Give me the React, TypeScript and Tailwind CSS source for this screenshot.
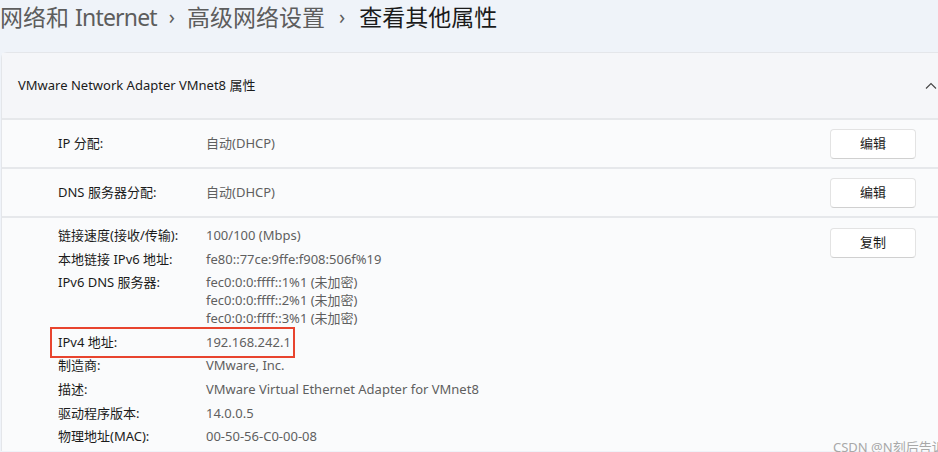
import React from "react";

const font = { fontFamily: '"Noto Sans", "Noto Sans CJK SC", sans-serif' };

function Btn({ children }: { children: React.ReactNode }) {
  return (
    <button className="w-[86px] h-[30px] rounded-[4px] bg-white border border-[#e3e3e3] border-b-[#d0d0d0] text-[13px] text-[#1b1b1b] flex items-center justify-center">
      {children}
    </button>
  );
}

const details: [string, string[]][] = [
  ["链接速度(接收/传输):", ["100/100 (Mbps)"]],
  ["本地链接 IPv6 地址:", ["fe80::77ce:9ffe:f908:506f%19"]],
  ["IPv6 DNS 服务器:", ["fec0:0:0:ffff::1%1 (未加密)", "fec0:0:0:ffff::2%1 (未加密)", "fec0:0:0:ffff::3%1 (未加密)"]],
  ["IPv4 地址:", ["192.168.242.1"]],
  ["制造商:", ["VMware, Inc."]],
  ["描述:", ["VMware Virtual Ethernet Adapter for VMnet8"]],
  ["驱动程序版本:", ["14.0.0.5"]],
  ["物理地址(MAC):", ["00-50-56-C0-00-08"]],
];

export default function App() {
  return (
    <div className="w-[938px] h-[452px] overflow-hidden bg-[#eff3f9] relative" style={font}>
      <div className="h-[52px] flex items-start pt-[1px] text-[23px] leading-[32px] whitespace-nowrap">
        <span className="text-[#5d5d5d]">网络和 <span className="tracking-[-0.8px]">Internet</span></span>
        <span className="text-[#5d5d5d] mx-[12px] text-[20px]">›</span>
        <span className="text-[#5d5d5d]">高级网络设置</span>
        <span className="text-[#5d5d5d] mx-[14px] text-[20px]">›</span>
        <span className="text-[#1b1b1b]">查看其他属性</span>
      </div>
      <div className="ml-[1px] w-[960px] rounded-tl-[6px] border-l border-t border-[#e4e6ea] bg-[#fafbfc]">
        <div className="h-[65px] bg-[#f5f6f9] flex items-center pl-[16px] text-[13px] text-[#1b1b1b] relative">
          VMware Network Adapter VMnet8 属性
          <svg className="absolute left-[923px] top-[29px]" width="12" height="8" viewBox="0 0 12 8">
            <path d="M1 6.5 L6 1.5 L11 6.5" fill="none" stroke="#444" strokeWidth="1.1" />
          </svg>
        </div>
        <div className="h-[2px] bg-[#e6e8eb]" />
        <div className="h-[47px] flex items-center text-[13px]">
          <div className="w-[204px] pl-[56px] text-[#1b1b1b]">IP 分配:</div>
          <div className="flex-1 text-[#5f5f5f]">自动(DHCP)</div>
          <div className="w-[131px]"><Btn>编辑</Btn></div>
        </div>
        <div className="h-[2px] bg-[#e6e8eb]" />
        <div className="h-[47px] flex items-center text-[13px]">
          <div className="w-[204px] pl-[56px] text-[#1b1b1b]">DNS 服务器分配:</div>
          <div className="flex-1 text-[#5f5f5f]">自动(DHCP)</div>
          <div className="w-[131px]"><Btn>编辑</Btn></div>
        </div>
        <div className="h-[2px] bg-[#e6e8eb]" />
        <div className="flex pt-[10px] text-[13px]">
          <div className="flex-1 flex flex-col pl-[56px] -mt-[2px]">
            {details.map(([label, vals], i) => (
              <div key={i} className="flex leading-[18px] pb-[5.6px] relative">
                {label === "IPv4 地址:" && (
                  <div className="absolute left-[-8px] top-[-6px] w-[245px] h-[31px] border-2 border-[#e8442e]" />
                )}
                <div className="w-[148px] text-[#1b1b1b]">{label}</div>
                <div className="flex flex-col text-[#5f5f5f]">
                  {vals.map((v, j) => (
                    <div key={j}>{v}</div>
                  ))}
                </div>
              </div>
            ))}
          </div>
          <div className="w-[131px]"><Btn>复制</Btn></div>
        </div>
      </div>
      <div className="absolute left-[833px] top-[438px] text-[13px] text-[#a8a8a8] whitespace-nowrap">CSDN @N刻后告诉</div>
    </div>
  );
}
